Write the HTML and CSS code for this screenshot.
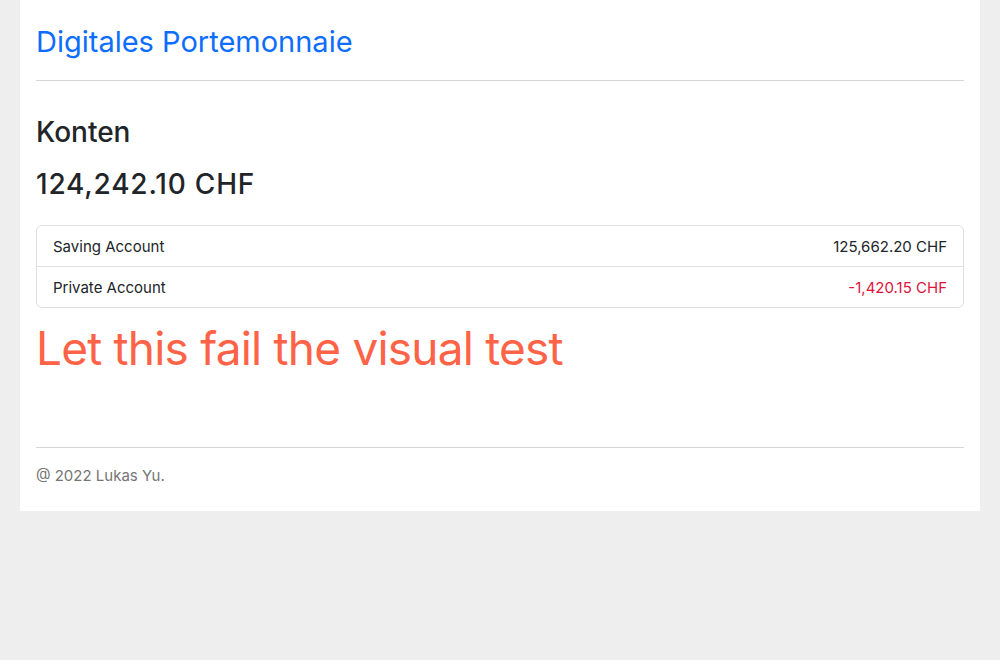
FILE: index.html
```html
<!DOCTYPE html>
<html lang="de">
<head>
<meta charset="utf-8">
<title>Digitales Portemonnaie</title>
<link rel="stylesheet" href="styles.css">
</head>
<body>
<div class="page">
  <header class="header">
    <a class="brand" href="#">Digitales Portemonnaie</a>
  </header>
  <main class="main">
    <h2 class="section-title">Konten</h2>
    <h3 class="total">124,242.10 CHF</h3>
    <ul class="list">
      <li class="list-item"><span>Saving Account</span><span>125,662.20 CHF</span></li>
      <li class="list-item"><span>Private Account</span><span class="negative">-1,420.15 CHF</span></li>
    </ul>
    <p class="fail">Let this fail the visual test</p>
  </main>
  <footer class="footer">@ 2022 Lukas Yu.</footer>
</div>
</body>
</html>
```
FILE: styles.css
```css
html, body { margin: 0; padding: 0; }
body {
  background: #eeeeee;
  font-family: Inter, "Noto Sans", sans-serif;
  color: #212529;
}
.page {
  margin: 0 20px;
  background: #ffffff;
  padding: 0 16px 24px;
}
.header {
  padding: 24px 0 20px;
  border-bottom: 1px solid #d6d6d6;
}
.brand {
  display: block;
  color: #0d6efd;
  text-decoration: none;
  font-size: 29px;
  line-height: 36px;
}
.main { padding-top: 35px; padding-bottom: 71px; }
.section-title {
  margin: 0 0 20px;
  font-size: 28px;
  font-weight: 500;
  line-height: 32px;
}
.total {
  margin: 0 0 25px;
  font-size: 28px;
  font-weight: 500;
  line-height: 32px;
  letter-spacing: 0.8px;
}
.list {
  list-style: none;
  margin: 0;
  padding: 0;
  border: 1px solid #dfdfdf;
  border-radius: 6px;
}
.list-item {
  display: flex;
  justify-content: space-between;
  align-items: center;
  padding: 0 16px;
  height: 40px;
  font-size: 15px;
}
.list-item + .list-item { border-top: 1px solid #dfdfdf; }
.negative { color: #dc143c; }
.fail {
  margin: 12px 0 0;
  color: #ff6347;
  font-size: 46px;
  line-height: 56px;
  letter-spacing: -0.8px;
}
.footer {
  border-top: 1px solid #d6d6d6;
  padding-top: 17px;
  color: #757575;
  font-size: 15px;
  line-height: 22px;
}
```
